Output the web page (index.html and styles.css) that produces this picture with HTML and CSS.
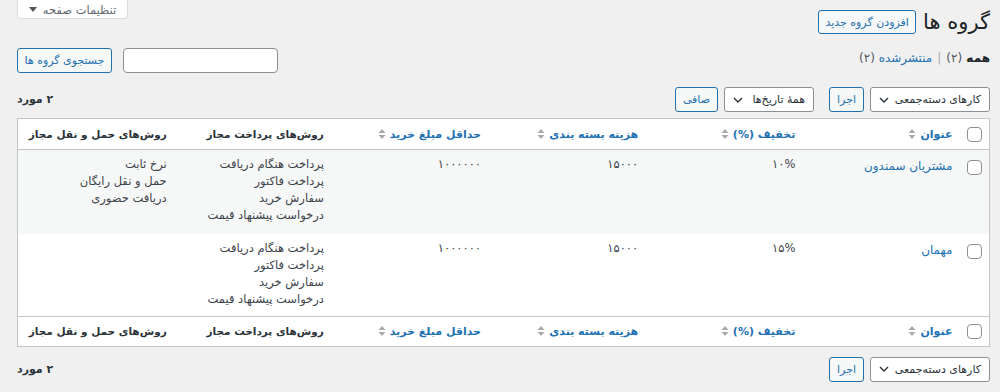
FILE: index.html
```html
<!DOCTYPE html>
<html lang="fa" dir="rtl">
<head>
<meta charset="utf-8">
<title>گروه ها</title>
<link rel="stylesheet" href="styles.css">
</head>
<body>
<div class="wrap">
  <div class="head-row">
    <h1 class="page-title">گروه ها</h1>
    <a class="button add-new">افزودن گروه جدید</a>
    <span class="screen-tab">تنظیمات صفحه <svg class="tab-tri" width="8" height="5" viewBox="0 0 8 5"><polygon points="0,0 8,0 4,5"/></svg></span>
  </div>

  <div class="sub-row">
    <ul class="subsubsub">
      <li class="current">همه <span class="count">(۲)</span></li>
      <li class="sep">|</li>
      <li><a class="link">منتشرشده</a> <span class="count">(۲)</span></li>
    </ul>
    <div class="search-box">
      <span class="search-input"></span>
      <a class="button search-btn">جستجوی گروه ها</a>
    </div>
  </div>

  <div class="tablenav">
    <div class="actions">
      <span class="select bulk">کارهای دسته‌جمعی<svg class="chev" width="10" height="6" viewBox="0 0 10 6"><path d="M1 1 L5 5 L9 1"/></svg></span>
      <a class="button apply">اجرا</a>
      <span class="select dates">همهٔ تاریخ‌ها<svg class="chev" width="10" height="6" viewBox="0 0 10 6"><path d="M1 1 L5 5 L9 1"/></svg></span>
      <a class="button filter">صافی</a>
    </div>
    <div class="num">۲ مورد</div>
  </div>

  <table class="list">
    <colgroup>
      <col class="col-cb">
      <col><col><col><col><col><col>
    </colgroup>
    <thead>
      <tr>
        <th class="cb"><span class="checkbox"></span></th>
        <th><a class="sort">عنوان<svg class="sort-ic" width="8" height="12" viewBox="0 0 8 12"><polygon points="4,1 7.5,5 0.5,5"/><polygon points="0.5,7 7.5,7 4,11"/></svg></a></th>
        <th><a class="sort">تخفیف (%)<svg class="sort-ic" width="8" height="12" viewBox="0 0 8 12"><polygon points="4,1 7.5,5 0.5,5"/><polygon points="0.5,7 7.5,7 4,11"/></svg></a></th>
        <th><a class="sort">هزینه بسته بندی<svg class="sort-ic" width="8" height="12" viewBox="0 0 8 12"><polygon points="4,1 7.5,5 0.5,5"/><polygon points="0.5,7 7.5,7 4,11"/></svg></a></th>
        <th><a class="sort">حداقل مبلغ خرید<svg class="sort-ic" width="8" height="12" viewBox="0 0 8 12"><polygon points="4,1 7.5,5 0.5,5"/><polygon points="0.5,7 7.5,7 4,11"/></svg></a></th>
        <th class="plain">روش‌های پرداخت مجاز</th>
        <th class="plain">روش‌های حمل و نقل مجاز</th>
      </tr>
    </thead>
    <tbody>
      <tr class="alt">
        <td class="cb"><span class="checkbox"></span></td>
        <td><a class="row-title">مشتریان سمندون</a></td>
        <td>۱۰%</td>
        <td>۱۵۰۰۰</td>
        <td>۱۰۰۰۰۰۰</td>
        <td>پرداخت هنگام دریافت<br>پرداخت فاکتور<br>سفارش خرید<br>درخواست پیشنهاد قیمت</td>
        <td>نرخ ثابت<br>حمل و نقل رایگان<br>دریافت حضوری</td>
      </tr>
      <tr>
        <td class="cb"><span class="checkbox"></span></td>
        <td><a class="row-title">مهمان</a></td>
        <td>۱۵%</td>
        <td>۱۵۰۰۰</td>
        <td>۱۰۰۰۰۰۰</td>
        <td>پرداخت هنگام دریافت<br>پرداخت فاکتور<br>سفارش خرید<br>درخواست پیشنهاد قیمت</td>
        <td></td>
      </tr>
    </tbody>
    <tfoot>
      <tr>
        <th class="cb"><span class="checkbox"></span></th>
        <th><a class="sort">عنوان<svg class="sort-ic" width="8" height="12" viewBox="0 0 8 12"><polygon points="4,1 7.5,5 0.5,5"/><polygon points="0.5,7 7.5,7 4,11"/></svg></a></th>
        <th><a class="sort">تخفیف (%)<svg class="sort-ic" width="8" height="12" viewBox="0 0 8 12"><polygon points="4,1 7.5,5 0.5,5"/><polygon points="0.5,7 7.5,7 4,11"/></svg></a></th>
        <th><a class="sort">هزینه بسته بندی<svg class="sort-ic" width="8" height="12" viewBox="0 0 8 12"><polygon points="4,1 7.5,5 0.5,5"/><polygon points="0.5,7 7.5,7 4,11"/></svg></a></th>
        <th><a class="sort">حداقل مبلغ خرید<svg class="sort-ic" width="8" height="12" viewBox="0 0 8 12"><polygon points="4,1 7.5,5 0.5,5"/><polygon points="0.5,7 7.5,7 4,11"/></svg></a></th>
        <th class="plain">روش‌های پرداخت مجاز</th>
        <th class="plain">روش‌های حمل و نقل مجاز</th>
      </tr>
    </tfoot>
  </table>

  <div class="tablenav bottom">
    <div class="actions">
      <span class="select bulk">کارهای دسته‌جمعی<svg class="chev" width="10" height="6" viewBox="0 0 10 6"><path d="M1 1 L5 5 L9 1"/></svg></span>
      <a class="button apply">اجرا</a>
    </div>
    <div class="num">۲ مورد</div>
  </div>
</div>
</body>
</html>
```

FILE: styles.css
```css
* { box-sizing: border-box; }

html, body {
  margin: 0;
  padding: 0;
  background: #f0f0f1;
}

body {
  direction: rtl;
  font-family: "DejaVu Sans", "Noto Sans", sans-serif;
  font-size: 12px;
  color: #3c434a;
  width: 1000px;
  height: 392px;
  overflow: hidden;
}

.wrap {
  padding: 0 10px 0 17px;
}

/* header */
.head-row {
  display: flex;
  align-items: flex-start;
  height: 37px;
}

.page-title {
  margin: 9px 0 0 0;
  font-size: 21px;
  font-weight: 400;
  line-height: 26px;
  color: #1d2327;
}

.button {
  display: inline-flex;
  align-items: center;
  justify-content: center;
  height: 25px;
  padding: 0 8px;
  border: 1px solid #2271b1;
  border-radius: 3px;
  background: #f6f7f7;
  color: #2271b1;
  font-size: 11px;
  text-decoration: none;
  white-space: nowrap;
}

.add-new {
  margin: 10px 7px 0 0;
  height: 24px;
  width: 98px;
}

.screen-tab {
  margin: -9px auto 0 0;
  height: 28px;
  width: 111px;
  display: flex;
  align-items: center;
  justify-content: center;
  gap: 6px;
  padding-top: 10px;
  background: #fff;
  border: 1px solid #dcdcde;
  border-top: none;
  border-radius: 0 0 4px 4px;
  color: #646970;
  font-size: 11.5px;
}

.tab-tri { fill: #50575e; }

/* sub row */
.sub-row {
  display: flex;
  align-items: flex-start;
  margin-top: 8px;
  height: 28px;
}

.subsubsub {
  list-style: none;
  margin: 3px 0 0 0;
  padding: 0;
  display: flex;
  gap: 5px;
  line-height: 20px;
  font-size: 12px;
  color: #50575e;
}

.subsubsub .current { color: #1d2327; font-weight: 700; }
.subsubsub .current .count { font-weight: 400; color: #50575e; }
.subsubsub .sep { color: #a7aaad; }
.link { color: #2271b1; }

.search-box {
  margin: 3px auto 0 0;
  display: flex;
  gap: 11px;
}

.search-input {
  display: block;
  width: 155px;
  height: 25px;
  background: #fff;
  border: 1px solid #8c8f94;
  border-radius: 4px;
}

.search-btn { width: 95px; }

/* tablenav */
.tablenav {
  display: flex;
  align-items: center;
  justify-content: space-between;
  margin-top: 14px;
  height: 25px;
}

.tablenav.bottom { margin-top: 10px; }

.actions {
  display: flex;
  align-items: center;
}

.select {
  display: inline-flex;
  align-items: center;
  justify-content: space-between;
  height: 25px;
  padding: 0 8px;
  background: #fff;
  border: 1px solid #8c8f94;
  border-radius: 3px;
  color: #2c3338;
  font-size: 11px;
  white-space: nowrap;
}

.chev {
  fill: none;
  stroke: #2c3338;
  stroke-width: 1.4;
  flex: none;
}

.bulk { width: 120px; }
.dates { width: 90px; }
.apply { width: 35px; margin-right: 6px; }
.dates { margin-right: 15px; }
.filter { width: 43px; margin-right: 6px; }

.num {
  font-size: 11px;
  font-weight: 700;
  color: #2c3338;
}

/* table */
.list {
  width: 100%;
  margin-top: 6px;
  border-collapse: collapse;
  table-layout: fixed;
  background: #fff;
  border: 1px solid #c3c4c7;
}

.col-cb { width: 29px; }

.list th {
  text-align: right;
  font-weight: 700;
  font-size: 11px;
  color: #2c3338;
  padding: 0 8px;
  height: 31px;
  vertical-align: middle;
  white-space: nowrap;
}

.list th.plain { font-size: 10.5px; }

.list thead th { border-bottom: 1px solid #c3c4c7; }
.list tfoot th { border-top: 1px solid #c3c4c7; height: 30px; }

.list th.cb, .list td.cb {
  padding: 0;
  text-align: center;
}

.checkbox {
  display: inline-block;
  width: 15px;
  height: 15px;
  border: 1px solid #8c8f94;
  border-radius: 4px;
  background: #fff;
  vertical-align: middle;
}

.list td.cb { padding-top: 9px; }

.sort {
  display: inline-flex;
  align-items: center;
  gap: 4px;
  color: #2271b1;
  text-decoration: none;
}

.sort-ic { fill: #a7aaad; }

.list td {
  vertical-align: top;
  padding: 6px 8px 8px;
  line-height: 17px;
  font-size: 11.5px;
  color: #3c434a;
}

.list tr.alt td { background: #f6f7f7; height: 84px; }
.list tbody tr:not(.alt) td { height: 80px; }

.row-title {
  color: #2271b1;
  font-size: 12px;
  text-decoration: none;
  line-height: 21px;
}
```
